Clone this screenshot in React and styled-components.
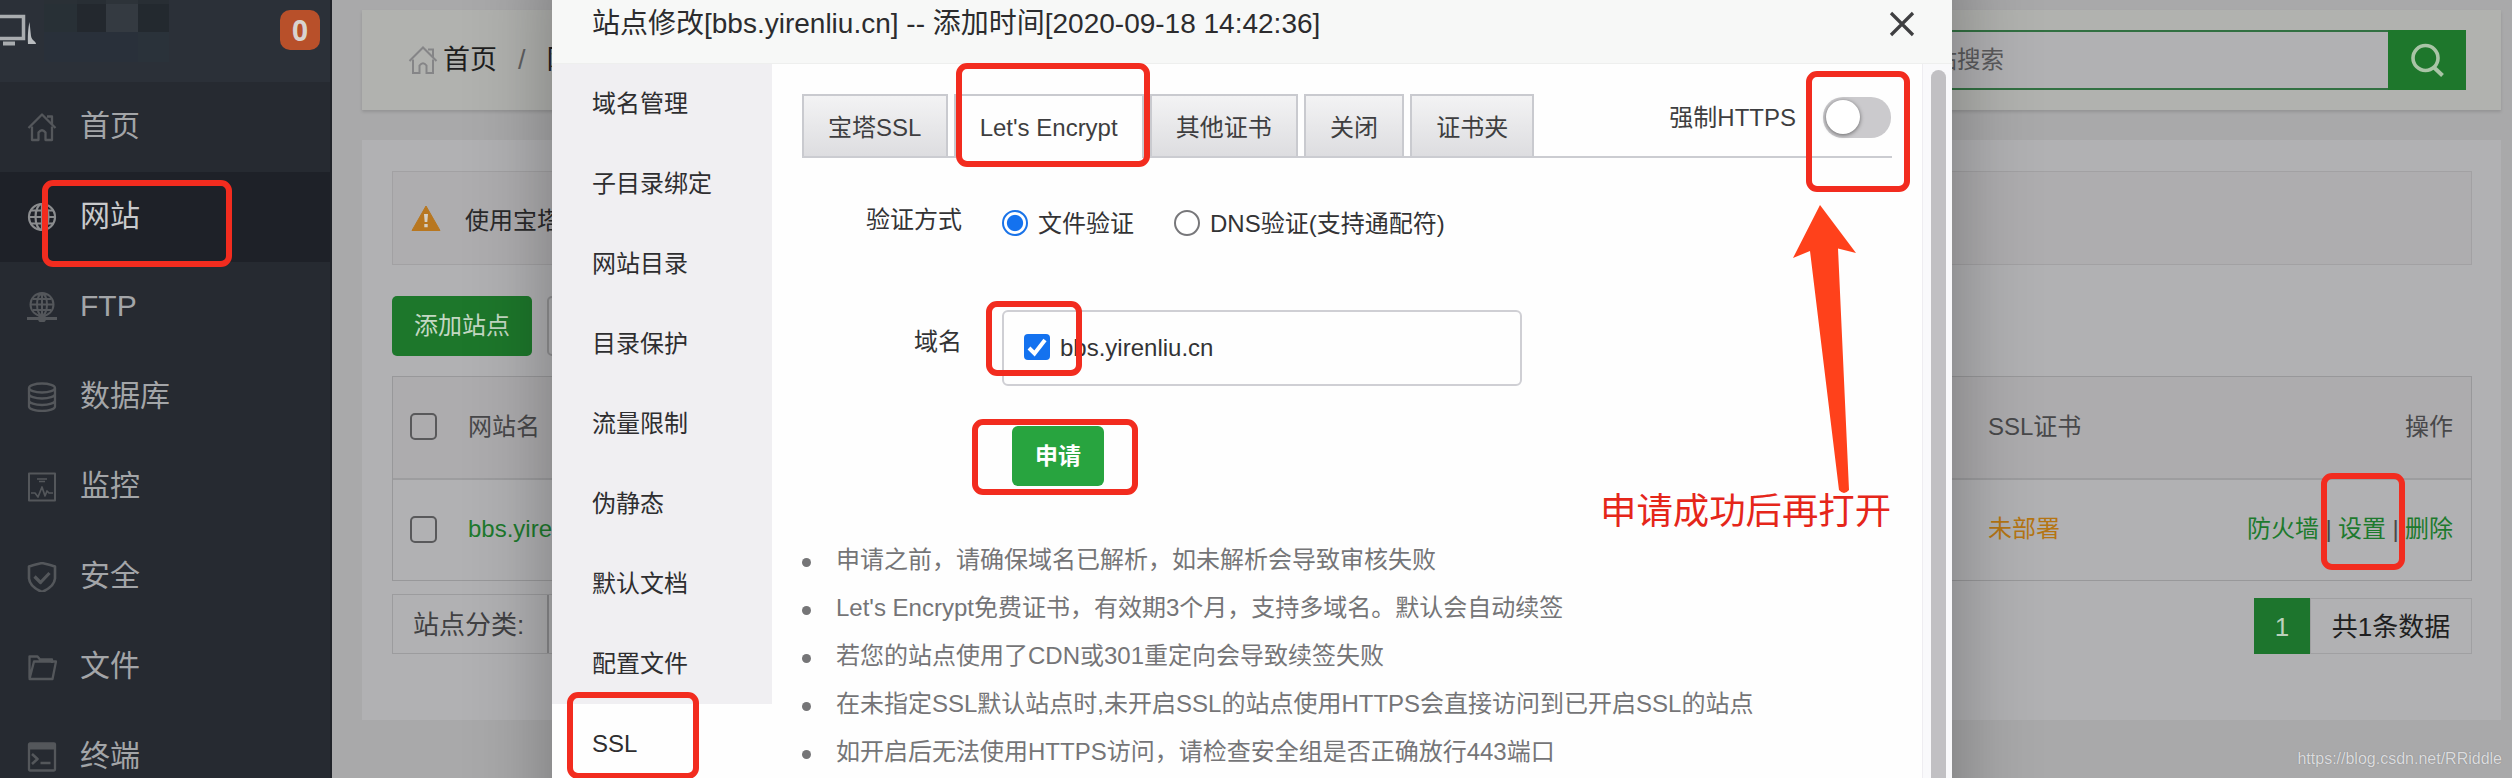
import React from 'react';
import styled, { createGlobalStyle, css } from 'styled-components';

const GlobalStyle = createGlobalStyle`
  *, *::before, *::after { box-sizing: border-box; }
  body {
    margin: 0;
    overflow: hidden;
    background: #a9a9aa;
    font-family: "Liberation Sans", "Noto Sans CJK SC", sans-serif;
    font-size: 24px;
    color: #2b2b2d;
  }
  svg { display: block; flex: none; }
`;

const Page = styled.div`
  position: relative;
  width: 2512px;
  height: 778px;
  overflow: hidden;
  display: grid;
  grid-template-columns: 332px 1fr;
`;

/* ---------- sidebar ---------- */
const Sidebar = styled.aside`
  height: 778px;
  overflow: hidden;
  background: #262a31;
  border-right: 2px solid #202329;
`;
const SidebarHead = styled.div`
  height: 82px;
  display: flex;
  align-items: flex-start;
  background: #2b3038;
`;
const Mosaic = styled.div`
  display: grid;
  grid-template-columns: 33px 29px 32px 31px;
  grid-template-rows: 4px 28px 30px;
  margin: 0 auto 0 7px;
`;
const Tile = styled.i`
  background: ${(p) => p.$tone};
`;
const Badge = styled.span`
  width: 40px;
  height: 40px;
  margin: 10px 10px 0 0;
  border-radius: 10px;
  background: #b8502a;
  color: #d8d3d0;
  font: bold 28px/40px "Open Sans", sans-serif;
  text-align: center;
`;
const MenuItem = styled.div`
  height: 90px;
  padding: 0 0 4px 27px;
  display: flex;
  align-items: center;
  gap: 23px;
  font-size: 30px;
  line-height: 41px;
  color: ${(p) => (p.$active ? '#c9cacc' : '#a3a5a8')};
  background: ${(p) => (p.$active ? '#1e2128' : 'transparent')};
  svg { color: ${(p) => (p.$active ? '#8b8d8f' : '#54575b')}; position: relative; top: 2px; }
`;

/* ---------- main page ---------- */
const Main = styled.main`
  height: 778px;
  padding: 10px 11px 0 30px;
  background: #a9a9aa;
`;
const TopBar = styled.div`
  height: 100px;
  padding: 0 35px 0 46px;
  display: flex;
  align-items: center;
  justify-content: space-between;
  background: #b1b2af;
  box-shadow: 0 2px 3px rgba(0, 0, 0, 0.13);
`;
const Crumbs = styled.div`
  display: flex;
  align-items: center;
  font-size: 27px;
  line-height: 41px;
  color: #1e1e20;
  white-space: nowrap;
`;
const HomeCrumb = styled.span`
  margin-left: 5px;
`;
const Slash = styled.span`
  margin: 0 21px;
  color: #606062;
`;
const Search = styled.div`
  width: 620px;
  height: 60px;
  display: flex;
`;
const SearchField = styled.div`
  flex: 1;
  padding-left: 62px;
  border: 2px solid #327042;
  border-right: 0;
  font-size: 23.5px;
  line-height: 56px;
  color: #5b5b5d;
  background: #b1b1b3;
`;
const SearchButton = styled.div`
  width: 78px;
  display: flex;
  align-items: center;
  justify-content: center;
  color: #a9c4a6;
  background: #1e772c;
`;
const Card = styled.section`
  height: 580px;
  margin-top: 30px;
  padding: 31px 29px 0 30px;
  background: #b1b1b3;
`;
const Alert = styled.div`
  height: 94px;
  padding-left: 18px;
  display: flex;
  align-items: center;
  gap: 24px;
  border: 1px solid #a2a1a3;
  background: #aeadaf;
  color: #2a2a2b;
`;
const Actions = styled.div`
  display: flex;
  gap: 15px;
  margin: 31px 0 20px;
`;
const ActionButton = styled.div`
  width: 140px;
  height: 60px;
  border-radius: 5px;
  line-height: 60px;
  text-align: center;
  font-size: 24px;
  color: #c3d8c3;
  background: #1d772b;
  ${(p) => p.$plain && css`
    border: 2px solid #919193;
    background: transparent;
  `}
`;
const Table = styled.div`
  border: 1.5px solid #98989a;
`;
const Row = styled.div`
  height: ${(p) => (p.$head ? 103 : 100)}px;
  padding: 0 18px 2px 17px;
  display: grid;
  grid-template-columns: 58px 1520px 1fr auto;
  align-items: center;
  line-height: 38px;
  color: #48484a;
  background: ${(p) => (p.$head ? '#adacae' : 'transparent')};
  border-bottom: ${(p) => (p.$head ? '2px solid #9d9d9f' : '0')};
`;
const EmptyBox = styled.span`
  width: 27px;
  height: 27px;
  border: 2px solid #59595b;
  border-radius: 5px;
`;
const Link = styled.span`
  color: ${(p) => (p.$warn ? '#b57513' : '#1d7a2d')};
`;
const Links = styled.div`
  display: flex;
`;
const Bar = styled.span`
  width: 19px;
  text-align: center;
`;
const CardFoot = styled.div`
  display: flex;
  justify-content: space-between;
  align-items: flex-end;
  height: 60px;
  margin-top: 13px;
`;
const Category = styled.div`
  display: flex;
  height: 60px;
  border: 1px solid #9c9c9e;
  line-height: 60px;
  font-size: 26px;
  color: #414143;
`;
const CategoryLabel = styled.div`
  width: 154px;
  padding-left: 20px;
`;
const CategorySelect = styled.div`
  width: 200px;
  border-left: 2px solid #8b8b8d;
`;
const Pager = styled.div`
  display: flex;
  height: 56px;
  font-size: 26px;
  line-height: 58px;
  text-align: center;
`;
const PageNumber = styled.span`
  width: 56px;
  color: #bdd1bc;
  background: #1d752d;
`;
const PageTotal = styled.span`
  width: 162px;
  border: 1px solid #a0a0a2;
  color: #1f1f21;
  line-height: 56px;
`;
const Watermark = styled.span`
  position: absolute;
  right: 10px;
  bottom: 8px;
  font-size: 16px;
  line-height: 22px;
  color: #dcdcde;
  text-shadow: 0 0 1px #77777a;
`;

/* ---------- dialog ---------- */
const Dialog = styled.div`
  position: absolute;
  left: 552px;
  top: -60px;
  width: 1400px;
  height: 940px;
  padding-top: 60px;
  background: #fefefe;
  box-shadow: 1px 1px 80px rgba(0, 0, 0, 0.32);
`;
const DialogHead = styled.header`
  height: 64px;
  padding: 0 37px 16px 40px;
  display: flex;
  align-items: center;
  justify-content: space-between;
  border-bottom: 1px solid #eeefee;
  background: #f7f8f7;
  line-height: 46px;
  color: #2c2c2e;
`;
const DialogTitle = styled.span`
  font-size: 28px;
  white-space: pre;
`;
const DialogBody = styled.div`
  display: grid;
  grid-template-columns: 220px 1150px 30px;
`;
const SideTab = styled.div`
  height: 80px;
  padding-left: 40px;
  line-height: 80px;
  color: #2e2e30;
  background: ${(p) => (p.$active ? '#fefefe' : '#f0eff2')};
`;
const Content = styled.div`
  padding: 30px 30px 0;
`;
const ScrollTrack = styled.div`
  height: 720px;
  padding: 6px 6px 0 8px;
  border-left: 1px solid #eeedf1;
  background: #f9f9fb;
`;
const ScrollThumb = styled.div`
  height: 740px;
  border-radius: 8px;
  background: #c1c0c3;
`;
const TabStrip = styled.div`
  height: 64px;
  display: flex;
  gap: 6px;
  border-bottom: 2px solid #cbccd1;
`;
const Tab = styled.div`
  height: ${(p) => (p.$active ? 64 : 62)}px;
  padding: 0 24.1px;
  border: 2px solid #c9cacf;
  border-bottom: 0;
  line-height: 64px;
  color: #3e3e40;
  background: ${(p) => (p.$active ? '#fefefe' : 'linear-gradient(#f3f3f4, #dddde0)')};
  white-space: nowrap;
`;
const ForceHttps = styled.div`
  margin: 0 1px 0 auto;
  display: flex;
  gap: 27px;
  color: #3e3e40;
  line-height: 48px;
`;
const Switch = styled.span`
  width: 68px;
  height: 41px;
  margin-top: 3px;
  padding: 3px;
  border-radius: 20px;
  background: #cbcacd;
`;
const Knob = styled.i`
  display: block;
  width: 34px;
  height: 34px;
  border-radius: 50%;
  background: #fff;
  box-shadow: 0 1px 4px rgba(0, 0, 0, 0.5);
`;
const FormRow = styled.div`
  display: flex;
  margin-top: ${(p) => p.$gap}px;
  line-height: ${(p) => p.$line}px;
  color: #333335;
`;
const FormLabel = styled.span`
  width: 160px;
  margin-right: 40px;
  text-align: right;
`;
const Radio = styled.span`
  width: 26px;
  height: 26px;
  margin: 20px 10px 0 0;
  border-radius: 50%;
  border: 2px solid ${(p) => (p.$on ? '#1a73e8' : '#77777a')};
  background: ${(p) => (p.$on ? 'radial-gradient(circle, #1472ef 0 7.6px, #fff 8.6px)' : '#fff')};
`;
const RadioText = styled.span`
  margin: 4px 40px 0 0;
`;
const DomainBox = styled.div`
  width: 520px;
  height: 76px;
  padding: 0 0 2px 20px;
  display: flex;
  align-items: center;
  gap: 10px;
  border: 2px solid #cfcfd4;
  border-radius: 6px;
  line-height: 40px;
`;
const Checked = styled.span`
  width: 26px;
  height: 26px;
  border-radius: 4px;
  background: #1472ef;
`;
const DomainName = styled.span`
  padding-top: 2px;
`;
const Apply = styled.div`
  width: 92px;
  height: 60px;
  margin: 40px 0 50px 210px;
  border-radius: 6px;
  background: #28a43f;
  color: #fff;
  font-weight: bold;
  font-size: 23px;
  line-height: 60px;
  text-align: center;
`;
const Tip = styled.div`
  height: 48px;
  display: flex;
  align-items: center;
  gap: 25px;
  line-height: 48px;
  color: #757577;
  white-space: nowrap;
  &::before {
    content: "";
    width: 9px;
    height: 9px;
    position: relative;
    top: 2px;
    border-radius: 50%;
    background: #757577;
  }
`;

/* ---------- hand-made annotations over the page ---------- */
const Mark = styled.div`
  position: absolute;
  left: ${(p) => p.$x}px;
  top: ${(p) => p.$y}px;
  width: ${(p) => p.$w}px;
  height: ${(p) => p.$h}px;
  border: 6px solid #f22c1f;
  border-radius: 11px;
`;
const ArrowLayer = styled.svg`
  position: absolute;
  left: 1790px;
  top: 200px;
`;
const Note = styled.div`
  position: absolute;
  left: 1600px;
  top: 485px;
  font-size: 36.4px;
  line-height: 54px;
  color: #e5261a;
  white-space: nowrap;
`;

const Icon = ({ children, size = 30, w = 2.3 }) => (
  <svg width={size} height={size} viewBox="0 0 30 30" fill="none" stroke="currentColor" strokeWidth={w} strokeLinejoin="round">
    {children}
  </svg>
);
const house = (
  <>
    <path d="M1.5 16 15 2.500l13.500 13.500" />
    <path d="M5 14.500V28h6.500v-7.500q3.500-4.500 7 0V28H25V14.500M20 4.500h5V12" />
  </>
);
const icons = {
  home: <Icon>{house}</Icon>,
  globe: (
    <Icon w={2.2}>
      <circle cx="15" cy="15" r="13" />
      <ellipse cx="15" cy="15" rx="6.500" ry="13" />
      <path d="M2 15h26M4 8.500h22M4 21.500h22M15 2v26" />
    </Icon>
  ),
  ftp: (
    <Icon w={2}>
      <circle cx="15" cy="12.500" r="11.500" />
      <ellipse cx="15" cy="12.500" rx="5" ry="11" />
      <path d="M4 12.500h22M6 7h18M6 18h18M15 1.500V23M10 2.500h10" />
      <path d="M0 26.500h30" strokeWidth="3" />
      <circle cx="15" cy="26.500" r="3" fill="currentColor" />
    </Icon>
  ),
  database: (
    <Icon>
      <ellipse cx="15" cy="6" rx="13" ry="4.500" />
      <path d="M2 6v18.500c0 2.500 6 4.500 13 4.500s13-2 13-4.500V6M2 12c0 2.500 6 4.500 13 4.500S28 14.500 28 12M2 18.500C2 21 8 23 15 23s13-2 13-4.500" />
    </Icon>
  ),
  monitor: (
    <Icon w={2}>
      <rect x="2" y="1.500" width="26" height="27" />
      <path d="M4 21h4l3 4 4-10 3 9 2-5 2 2h4M10 7h10M12 9.500h6" strokeWidth="1.700" />
    </Icon>
  ),
  shield: (
    <Icon w={2.6}>
      <path d="M15 1C11 2 6 3 2 4.500v12C2.500 22 8 27 15 30c7-3 12.500-8 13-13.500v-12C24 3 19 2 15 1Z" />
      <path d="m7.500 14.500 6 6 9-9.500" strokeWidth="3.200" />
    </Icon>
  ),
  folder: (
    <Icon>
      <path d="M2.500 26V4.500h8l2.500 3h12V11M2.500 27 7 9.500h22L25.500 27h-23Z" />
    </Icon>
  ),
  terminal: (
    <Icon>
      <rect x="2" y="1.500" width="26" height="27" rx="1" />
      <path d="M2 4.500h26" strokeWidth="6" />
      <path d="m5 12 5.500 5L5 22M13.500 21h10" strokeWidth="2.600" />
    </Icon>
  ),
};

const menu = [
  ['home', '首页'],
  ['globe', '网站', true],
  ['ftp', 'FTP'],
  ['database', '数据库'],
  ['monitor', '监控'],
  ['shield', '安全'],
  ['folder', '文件'],
  ['terminal', '终端'],
];
const tiles = [
  '#2a3036', '#282e34', '#2d3339', '#282e34',
  '#283036', '#23282e', '#343a41', '#23292f',
  '#29303a', '#29303a', '#29303a', '#2a323a',
];
const sideTabs = ['域名管理', '子目录绑定', '网站目录', '目录保护', '流量限制', '伪静态', '默认文档', '配置文件', 'SSL'];
const tabs = ['宝塔SSL', "Let's Encrypt", '其他证书', '关闭', '证书夹'];
const tips = [
  '申请之前，请确保域名已解析，如未解析会导致审核失败',
  "Let's Encrypt免费证书，有效期3个月，支持多域名。默认会自动续签",
  '若您的站点使用了CDN或301重定向会导致续签失败',
  '在未指定SSL默认站点时,未开启SSL的站点使用HTTPS会直接访问到已开启SSL的站点',
  '如开启后无法使用HTTPS访问，请检查安全组是否正确放行443端口',
];
const marks = [
  [42, 180, 190, 87],
  [956, 63, 194, 104],
  [986, 301, 96, 75],
  [972, 419, 166, 76],
  [1806, 71, 104, 121],
  [567, 692, 132, 87],
  [2321, 473, 84, 97],
];

export default function App() {
  return (
    <Page>
      <GlobalStyle />
      <Sidebar>
        <SidebarHead>
          <svg width="37" height="50" viewBox="0 0 37 50" fill="none" stroke="#a9acaf">
            <path d="M-6 16.500h29.500v22H-6" strokeWidth="3.500" />
            <path d="M3 43.500h12" strokeWidth="4" />
            <path d="M29.500 22c-1.500 6-2 16-1.500 22h8c0-3-4-3-5-8Z" fill="#b9bcbf" stroke="none" />
          </svg>
          <Mosaic>{tiles.map((tone, i) => <Tile key={i} $tone={tone} />)}</Mosaic>
          <Badge>0</Badge>
        </SidebarHead>
        {menu.map(([icon, label, active]) => (
          <MenuItem key={icon} $active={active}>{icons[icon]}{label}</MenuItem>
        ))}
      </Sidebar>

      <Main>
        <TopBar>
          <Crumbs>
            <svg width="30" height="30" viewBox="0 0 30 30" fill="none" stroke="#858587" strokeWidth="2">{house}</svg>
            <HomeCrumb>首页</HomeCrumb><Slash>/</Slash>网站管理
          </Crumbs>
          <Search>
            <SearchField>网站搜索</SearchField>
            <SearchButton>
              <svg width="34" height="34" viewBox="0 0 34 34" fill="none" stroke="currentColor" strokeWidth="3.600">
                <circle cx="15.500" cy="15" r="12.500" />
                <path d="m23.500 24 9 8.500" strokeWidth="4" />
              </svg>
            </SearchButton>
          </Search>
        </TopBar>
        <Card>
          <Alert>
            <svg width="30" height="28" viewBox="0 0 30 28">
              <path d="M15 2 29 26.500H1Z" fill="#b87720" stroke="#b87720" strokeLinejoin="round" />
              <path d="M13 10h4l-.7 8h-2.600ZM13.300 20h3.400v3.200h-3.400Z" fill="#d5cfc5" />
            </svg>
            使用宝塔
          </Alert>
          <Actions>
            <ActionButton>添加站点</ActionButton>
            <ActionButton $plain />
          </Actions>
          <Table>
            <Row $head>
              <EmptyBox /><span>网站名</span><span>SSL证书</span><span>操作</span>
            </Row>
            <Row>
              <EmptyBox /><Link>bbs.yirenliu.cn</Link><Link $warn>未部署</Link>
              <Links>
                <Link>防火墙</Link><Bar>|</Bar><Link>设置</Link><Bar>|</Bar><Link>删除</Link>
              </Links>
            </Row>
          </Table>
          <CardFoot>
            <Category>
              <CategoryLabel>站点分类:</CategoryLabel>
              <CategorySelect />
            </Category>
            <Pager>
              <PageNumber>1</PageNumber>
              <PageTotal>共1条数据</PageTotal>
            </Pager>
          </CardFoot>
        </Card>
      </Main>
      <Watermark>https://blog.csdn.net/RRiddle</Watermark>

      <Dialog>
        <DialogHead>
          <DialogTitle>站点修改[bbs.yirenliu.cn] -- 添加时间[2020-09-18 14:42:36]</DialogTitle>
          <svg width="26" height="26" viewBox="0 0 26 26" stroke="#3f3f41" strokeWidth="3.200">
            <path d="m2 2 22 22M24 2 2 24" />
          </svg>
        </DialogHead>
        <DialogBody>
          <nav>
            {sideTabs.map((label) => <SideTab key={label} $active={label === 'SSL'}>{label}</SideTab>)}
          </nav>
          <Content>
            <TabStrip>
              {tabs.map((label, i) => <Tab key={label} $active={i === 1}>{label}</Tab>)}
              <ForceHttps>强制HTTPS<Switch><Knob /></Switch></ForceHttps>
            </TabStrip>
            <FormRow $gap={32} $line={60}>
              <FormLabel>验证方式</FormLabel>
              <Radio $on /><RadioText>文件验证</RadioText>
              <Radio /><RadioText>DNS验证(支持通配符)</RadioText>
            </FormRow>
            <FormRow $gap={56} $line={64}>
              <FormLabel>域名</FormLabel>
              <DomainBox>
                <Checked>
                  <svg width="26" height="26" viewBox="0 0 26 26" fill="none" stroke="#fff" strokeWidth="4">
                    <path d="m5 14 5.500 5.500L21 6" />
                  </svg>
                </Checked>
                <DomainName>bbs.yirenliu.cn</DomainName>
              </DomainBox>
            </FormRow>
            <Apply>申请</Apply>
            {tips.map((tip) => <Tip key={tip}>{tip}</Tip>)}
          </Content>
          <ScrollTrack><ScrollThumb /></ScrollTrack>
        </DialogBody>
      </Dialog>

      {marks.map(([x, y, w, h]) => <Mark key={x} $x={x} $y={y} $w={w} $h={h} />)}
      <ArrowLayer width="70" height="296" viewBox="0 0 70 296">
        <path d="M30 5 66 53 48 48.500 59 290q-5 6-10 0L20 51 3 58Z" fill="#ff411b" />
      </ArrowLayer>
      <Note>申请成功后再打开</Note>
    </Page>
  );
}
